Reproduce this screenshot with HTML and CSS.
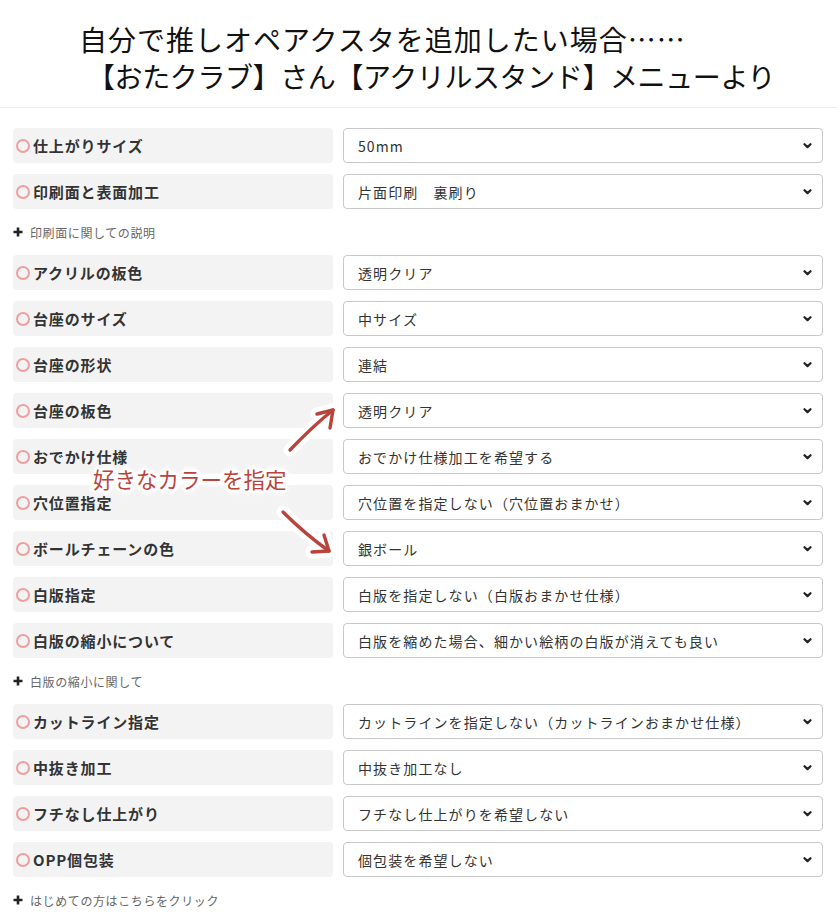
FILE: index.html
```html
<!DOCTYPE html>
<html lang="ja">
<head>
<meta charset="utf-8">
<title>アクリルスタンド</title>
<link rel="stylesheet" href="styles.css">
</head>
<body>
<header class="head">
  <div class="head-line head-line-1">自分で推しオペアクスタを追加したい場合……</div>
  <div class="head-line head-line-2">【おたクラブ】さん【アクリルスタンド】メニューより</div>
</header>

<main class="form">
  <div class="row"><div class="label"><span class="mark"></span>仕上がりサイズ</div><div class="select"><span>50mm</span><svg class="chev" viewBox="0 0 10 7"><path d="M1.5 1.5 L5 4.8 L8.5 1.5"/></svg></div></div>
  <div class="row"><div class="label"><span class="mark"></span>印刷面と表面加工</div><div class="select"><span>片面印刷　裏刷り</span><svg class="chev" viewBox="0 0 10 7"><path d="M1.5 1.5 L5 4.8 L8.5 1.5"/></svg></div></div>
  <div class="more"><svg class="plus" viewBox="0 0 10 10"><path d="M5 0.5 V9.5 M0.5 5 H9.5"/></svg>印刷面に関しての説明</div>
  <div class="row"><div class="label"><span class="mark"></span>アクリルの板色</div><div class="select"><span>透明クリア</span><svg class="chev" viewBox="0 0 10 7"><path d="M1.5 1.5 L5 4.8 L8.5 1.5"/></svg></div></div>
  <div class="row"><div class="label"><span class="mark"></span>台座のサイズ</div><div class="select"><span>中サイズ</span><svg class="chev" viewBox="0 0 10 7"><path d="M1.5 1.5 L5 4.8 L8.5 1.5"/></svg></div></div>
  <div class="row"><div class="label"><span class="mark"></span>台座の形状</div><div class="select"><span>連結</span><svg class="chev" viewBox="0 0 10 7"><path d="M1.5 1.5 L5 4.8 L8.5 1.5"/></svg></div></div>
  <div class="row"><div class="label"><span class="mark"></span>台座の板色</div><div class="select"><span>透明クリア</span><svg class="chev" viewBox="0 0 10 7"><path d="M1.5 1.5 L5 4.8 L8.5 1.5"/></svg></div></div>
  <div class="row"><div class="label"><span class="mark"></span>おでかけ仕様</div><div class="select"><span>おでかけ仕様加工を希望する</span><svg class="chev" viewBox="0 0 10 7"><path d="M1.5 1.5 L5 4.8 L8.5 1.5"/></svg></div></div>
  <div class="row"><div class="label"><span class="mark"></span>穴位置指定</div><div class="select"><span>穴位置を指定しない（穴位置おまかせ）</span><svg class="chev" viewBox="0 0 10 7"><path d="M1.5 1.5 L5 4.8 L8.5 1.5"/></svg></div></div>
  <div class="row"><div class="label"><span class="mark"></span>ボールチェーンの色</div><div class="select"><span>銀ボール</span><svg class="chev" viewBox="0 0 10 7"><path d="M1.5 1.5 L5 4.8 L8.5 1.5"/></svg></div></div>
  <div class="row"><div class="label"><span class="mark"></span>白版指定</div><div class="select"><span>白版を指定しない（白版おまかせ仕様）</span><svg class="chev" viewBox="0 0 10 7"><path d="M1.5 1.5 L5 4.8 L8.5 1.5"/></svg></div></div>
  <div class="row"><div class="label"><span class="mark"></span>白版の縮小について</div><div class="select"><span>白版を縮めた場合、細かい絵柄の白版が消えても良い</span><svg class="chev" viewBox="0 0 10 7"><path d="M1.5 1.5 L5 4.8 L8.5 1.5"/></svg></div></div>
  <div class="more"><svg class="plus" viewBox="0 0 10 10"><path d="M5 0.5 V9.5 M0.5 5 H9.5"/></svg>白版の縮小に関して</div>
  <div class="row"><div class="label"><span class="mark"></span>カットライン指定</div><div class="select"><span>カットラインを指定しない（カットラインおまかせ仕様）</span><svg class="chev" viewBox="0 0 10 7"><path d="M1.5 1.5 L5 4.8 L8.5 1.5"/></svg></div></div>
  <div class="row"><div class="label"><span class="mark"></span>中抜き加工</div><div class="select"><span>中抜き加工なし</span><svg class="chev" viewBox="0 0 10 7"><path d="M1.5 1.5 L5 4.8 L8.5 1.5"/></svg></div></div>
  <div class="row"><div class="label"><span class="mark"></span>フチなし仕上がり</div><div class="select"><span>フチなし仕上がりを希望しない</span><svg class="chev" viewBox="0 0 10 7"><path d="M1.5 1.5 L5 4.8 L8.5 1.5"/></svg></div></div>
  <div class="row"><div class="label"><span class="mark"></span>OPP個包装</div><div class="select"><span>個包装を希望しない</span><svg class="chev" viewBox="0 0 10 7"><path d="M1.5 1.5 L5 4.8 L8.5 1.5"/></svg></div></div>
  <div class="more"><svg class="plus" viewBox="0 0 10 10"><path d="M5 0.5 V9.5 M0.5 5 H9.5"/></svg>はじめての方はこちらをクリック</div>

  <div class="note">
    <svg class="arrows" viewBox="0 0 300 200" width="300" height="200">
      <g class="halo">
        <path d="M197 52 Q220 28 240 12"/>
        <path d="M224 16 L240 12 L237 30"/>
        <path d="M190 114 Q212 136 236 153"/>
        <path d="M219 154 L236 153 L231 137"/>
      </g>
      <g class="ink">
        <path d="M197 52 Q220 28 240 12"/>
        <path d="M224 16 L240 12 L237 30"/>
        <path d="M190 114 Q212 136 236 153"/>
        <path d="M219 154 L236 153 L231 137"/>
      </g>
    </svg>
    <span class="note-text">好きなカラーを指定</span>
  </div>
</main>
</body>
</html>
```

FILE: styles.css
```css
html, body {
  margin: 0;
  padding: 0;
  background: #fff;
}

body {
  font-family: "Noto Sans CJK JP", "Noto Sans", sans-serif;
  color: #333;
  width: 837px;
}

.head {
  height: 108px;
  border-bottom: 1px solid #ececec;
  box-sizing: border-box;
  padding-top: 21px;
  padding-left: 79px;
  color: #111;
  font-size: 28px;
  line-height: 37px;
  font-weight: 400;
}

.head-line-1 {
  letter-spacing: 1px;
}

.head-line-2 {
  padding-left: 8px;
  letter-spacing: -0.4px;
}

.form {
  position: relative;
  padding: 20px 14px 0 13px;
  display: flex;
  flex-direction: column;
  gap: 11px;
}

.row {
  display: grid;
  grid-template-columns: 320px 480px;
  column-gap: 10px;
  height: 35px;
}

.label {
  background: #f3f3f3;
  border-radius: 4px;
  display: flex;
  align-items: center;
  padding-left: 3px;
  font-size: 15px;
  font-weight: 700;
  color: #333;
  letter-spacing: 0.85px;
}

.mark {
  display: block;
  width: 14px;
  height: 14px;
  box-sizing: border-box;
  border: 2px solid #ef9f9f;
  border-radius: 50%;
  margin-right: 3px;
  flex: none;
}

.select {
  border: 1px solid #c9c9c9;
  border-radius: 4px;
  box-sizing: border-box;
  display: flex;
  align-items: center;
  justify-content: space-between;
  padding: 0 10px 0 14px;
  font-size: 14px;
  letter-spacing: 1.1px;
  color: #333;
}

.chev {
  width: 9px;
  height: 6px;
  fill: none;
  stroke: #222;
  stroke-width: 2.6;
  stroke-linecap: round;
  stroke-linejoin: round;
}

.more {
  height: 24px;
  display: flex;
  align-items: center;
  font-size: 12px;
  color: #666;
  letter-spacing: 0.6px;
}

.plus {
  width: 10px;
  height: 10px;
  margin-right: 7px;
  fill: none;
  stroke: #222;
  stroke-width: 2.6;
  flex: none;
}

.note {
  position: absolute;
  left: 93px;
  top: 290px;
  width: 300px;
  height: 200px;
  pointer-events: none;
}

.arrows {
  position: absolute;
  left: 0;
  top: 0;
  overflow: visible;
}

.arrows path {
  fill: none;
  stroke-linecap: round;
  stroke-linejoin: round;
}

.halo path {
  stroke: #fff;
  stroke-width: 13;
}

.ink path {
  stroke: #b9443c;
  stroke-width: 3.4;
}

.note-text {
  position: absolute;
  left: 0;
  top: 66px;
  font-size: 21.5px;
  line-height: 30px;
  color: #b9443c;
  white-space: nowrap;
  text-shadow:
    0 0 3px #fff, 0 0 3px #fff, 0 0 4px #fff,
    3px 0 0 #fff, -3px 0 0 #fff, 0 3px 0 #fff, 0 -3px 0 #fff,
    2px 2px 0 #fff, -2px 2px 0 #fff, 2px -2px 0 #fff, -2px -2px 0 #fff,
    5px 0 3px #fff, -5px 0 3px #fff, 0 5px 3px #fff, 0 -5px 3px #fff;
}
```
